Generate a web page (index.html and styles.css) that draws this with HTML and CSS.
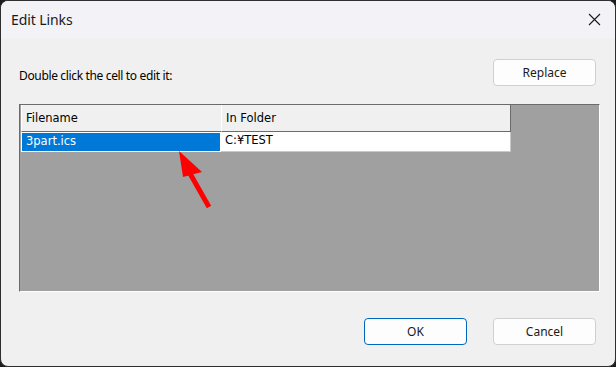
FILE: index.html
```html
<!DOCTYPE html>
<html lang="en">
<head>
<meta charset="utf-8">
<title>Edit Links</title>
<link rel="stylesheet" href="styles.css">
</head>
<body>

<!-- DIALOG WINDOW -->
<div class="window">
  <div class="titlebar">
    <span class="title">Edit Links</span>
    <svg class="close" width="13" height="13" viewBox="0 0 13 13"><path d="M1 1L12 12M12 1L1 12" stroke="#1a1a1a" stroke-width="1.1" fill="none"/></svg>
  </div>

  <div class="content">
    <div class="toprow">
      <p class="hint">Double click the cell to edit it:</p>
      <button class="btn">Replace</button>
    </div>

    <!-- LINKS GRID -->
    <div class="grid">
      <div class="row head">
        <div class="cell">Filename</div>
        <div class="cell last">In Folder</div>
      </div>
      <div class="row data">
        <div class="cell sel">3part.ics</div>
        <div class="cell last">C:¥TEST</div>
      </div>
      <svg class="arrow" width="60" height="70" viewBox="0 0 60 70">
        <line x1="50" y1="57" x2="29" y2="20" stroke="#f00" stroke-width="5"/>
        <polygon points="20,1 43,22 24,27" fill="#f00"/>
      </svg>
    </div>

    <div class="btnrow">
      <button class="btn default">OK</button>
      <button class="btn">Cancel</button>
    </div>
  </div>
</div>

</body>
</html>
```

FILE: styles.css
```css
*{box-sizing:border-box;margin:0;padding:0}
html,body{background:#1c1c1c}
body{width:616px;height:367px;overflow:hidden;font-family:"Noto Sans","Open Sans",Arial,sans-serif;color:#000}

/* ---------- WINDOW ---------- */
.window{
  width:616px;height:367px;border:1px solid #2e2e2e;border-radius:8px;
  background:#f0f0f0;overflow:hidden;display:flex;flex-direction:column;
}
.titlebar{
  height:37px;background:#f3f2f7;display:flex;align-items:center;
  justify-content:space-between;padding:0 14px 0 10px;
}
.title{font-size:14px;color:#1a1a1a;letter-spacing:-.1px}

/* ---------- CONTENT ---------- */
.content{padding:0 19px 0 18px;position:relative;flex:1}
.toprow{display:flex;justify-content:space-between;align-items:center;margin-top:21px;height:27px}
.hint{font-size:12px;padding-top:6px;letter-spacing:-.35px}

.btn{
  width:103px;height:27px;background:#fdfdfd;border:1px solid #d0d0d0;
  border-radius:4px;font-family:inherit;font-size:12px;color:#1a1a1a
}
.btn.default{border-color:#0067c0}
.btnrow{display:flex;justify-content:flex-end;gap:26px;margin-top:26px}

/* ---------- GRID ---------- */
.grid{
  position:relative;margin:18px 0 0 0;width:581px;height:188px;
  background:#a0a0a0;border:1px solid #fff;border-top-color:#6b6b6b;border-left-color:#6b6b6b;
  padding:0 0 0 1px;font-family:"DejaVu Sans",Tahoma,sans-serif;font-size:11.5px;
}
.row{display:grid;grid-template-columns:200px 290px;width:490px}
.head .cell{
  height:27px;background:#f0f0f0;border-left:1px solid #fff;border-bottom:1px solid #6b6b6b;
  padding:6px 0 0 4px;
}
.head .last{border-right:1px solid #6b6b6b}
.data .cell{height:20px;background:#fff;padding:1px 0 0 4px;border-bottom:1px solid #c8c8c8}
.data .last{border-right:1px solid #c8c8c8}
.data .sel{background:#0078d7;color:#fff;border:1px solid #fff}
.arrow{position:absolute;left:139px;top:45px}
```
